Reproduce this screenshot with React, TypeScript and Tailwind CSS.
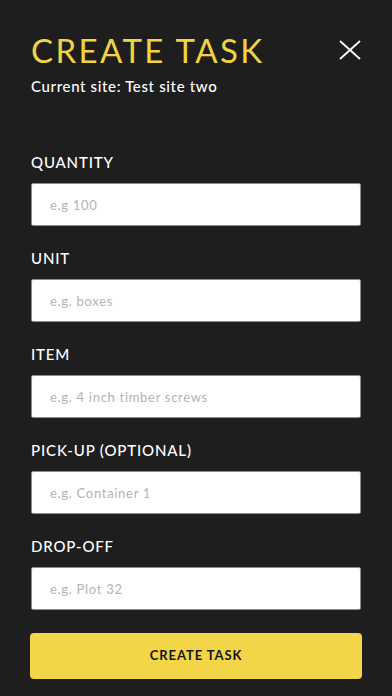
import React from 'react';

const fields = [
  { label: 'QUANTITY', placeholder: 'e.g 100' },
  { label: 'UNIT', placeholder: 'e.g. boxes' },
  { label: 'ITEM', placeholder: 'e.g. 4 inch timber screws' },
  { label: 'PICK-UP (OPTIONAL)', placeholder: 'e.g. Container 1' },
  { label: 'DROP-OFF', placeholder: 'e.g. Plot 32' },
];

const App: React.FC = () => {
  return (
    <div
      className="w-[392px] h-[696px] bg-[#1e1e1e] overflow-hidden px-[31px]"
      style={{ fontFamily: 'Lato, "Noto Sans", sans-serif' }}
    >
      <div className="flex justify-between items-start pt-[31px]">
        <h1 className="text-[33px] leading-[38px] text-[#f2d43f] tracking-[2.4px]">CREATE TASK</h1>
        <button className="mt-[9px] mr-[-1px]">
          <svg width="24" height="20" viewBox="0 0 24 20">
            <line x1="2" y1="1" x2="22" y2="19" stroke="#fff" strokeWidth="1.8" />
            <line x1="22" y1="1" x2="2" y2="19" stroke="#fff" strokeWidth="1.8" />
          </svg>
        </button>
      </div>
      <p className="mt-[7px] text-[15px] leading-[20px] font-medium text-white tracking-[0.65px]">
        Current site: Test site two
      </p>

      <form className="mt-[56px] flex flex-col gap-[22px]">
        {fields.map((f) => (
          <div key={f.label} className="flex flex-col gap-[11px]">
            <label className="text-[15px] leading-[20px] font-medium text-white tracking-[0.85px]">{f.label}</label>
            <input
              type="text"
              placeholder={f.placeholder}
              className="w-[330px] h-[43px] bg-white border border-[#8c8c8c] rounded-[2px] pl-[18px] text-[13px] tracking-[0.7px] text-[#222] placeholder-[#b3b3b3] outline-none"
            />
          </div>
        ))}
      </form>

      <button className="mt-[23px] w-[332px] -ml-[1px] h-[46px] bg-[#f3d548] rounded-[4px] text-[13px] font-bold text-[#141414] tracking-[0.9px]">
        CREATE TASK
      </button>
    </div>
  );
};

export default App;
